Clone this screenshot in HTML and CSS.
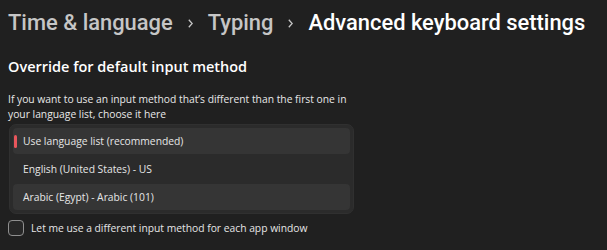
FILE: index.html
```html
<!DOCTYPE html>
<html lang="en">
<head>
  <meta charset="UTF-8">
  <title>Advanced keyboard settings</title>
  <link rel="stylesheet" href="styles.css">
</head>
<body>

<div class="page">

  <!-- Breadcrumb -->
  <div class="breadcrumb">
    <span class="crumb">Time &amp; language</span>
    <svg class="chevron" width="5" height="9" viewBox="0 0 5 9"><polyline points="0.8,0.8 4.2,4.5 0.8,8.2" fill="none" stroke="#c6c6c6" stroke-width="1.3"/></svg>
    <span class="crumb">Typing</span>
    <svg class="chevron" width="5" height="9" viewBox="0 0 5 9"><polyline points="0.8,0.8 4.2,4.5 0.8,8.2" fill="none" stroke="#c6c6c6" stroke-width="1.3"/></svg>
    <span class="crumb current">Advanced keyboard settings</span>
  </div>

  <h2 class="section-title">Override for default input method</h2>
  <p class="description">If you want to use an input method that’s different than the first one in<br>your language list, choose it here</p>

  <!-- Open dropdown -->
  <div class="menu">
    <div class="menu-item selected">Use language list (recommended)</div>
    <div class="menu-item">English (United States) - US</div>
    <div class="menu-item hover">Arabic (Egypt) - Arabic (101)</div>
  </div>

  <label class="check-row">
    <span class="checkbox"></span>
    Let me use a different input method for each app window
  </label>

</div>

</body>
</html>
```

FILE: styles.css
```css
html, body {
  margin: 0;
  background-color: #202020;
}

body {
  font-family: "Open Sans", "Noto Sans", sans-serif;
  color: #ffffff;
}

.page {
  padding: 4px 8px 0 8px;
  width: 591px;
  height: 246px;
  overflow: hidden;
}

.breadcrumb {
  display: flex;
  align-items: center;
  font-family: Roboto, "Open Sans", sans-serif;
  font-weight: 500;
  font-size: 21.9px;
  height: 36px;
  white-space: nowrap;
}

.crumb {
  color: #c6c6c6;
}

.crumb.current {
  color: #ffffff;
}

.chevron {
  flex-shrink: 0;
  margin: 2px 15px 0 15px;
}

.section-title {
  font-size: 14.5px;
  font-weight: 600;
  margin: 17px 0 0 0;
  line-height: 20px;
}

.description {
  font-size: 10.3px;
  line-height: 15px;
  margin: 15px 0 0 0;
  color: #e8e8e8;
}

.menu {
  width: 337px;
  margin: 2px 0 0 1px;
  padding: 3px 3px;
  background-color: #2b2b2b;
  border: 1px solid #303030;
  border-radius: 7px;
}

.menu-item {
  position: relative;
  height: 26px;
  line-height: 26px;
  font-size: 10.3px;
  color: #e6e6e6;
  padding-left: 10px;
  border-radius: 4px;
  margin-bottom: 2px;
}

.menu-item:last-child {
  margin-bottom: 0;
}

.menu-item.selected,
.menu-item.hover {
  background-color: #353535;
}

.menu-item.selected::before {
  content: "";
  position: absolute;
  left: 1px;
  top: 7px;
  width: 3px;
  height: 13px;
  border-radius: 2px;
  background-color: #e9565c;
}

.check-row {
  display: flex;
  align-items: center;
  font-size: 10.3px;
  color: #e6e6e6;
  margin-top: 6px;
}

.checkbox {
  width: 14px;
  height: 14px;
  border: 1px solid #8f8f8f;
  border-radius: 4px;
  margin-right: 7px;
  background-color: #272727;
}
```
